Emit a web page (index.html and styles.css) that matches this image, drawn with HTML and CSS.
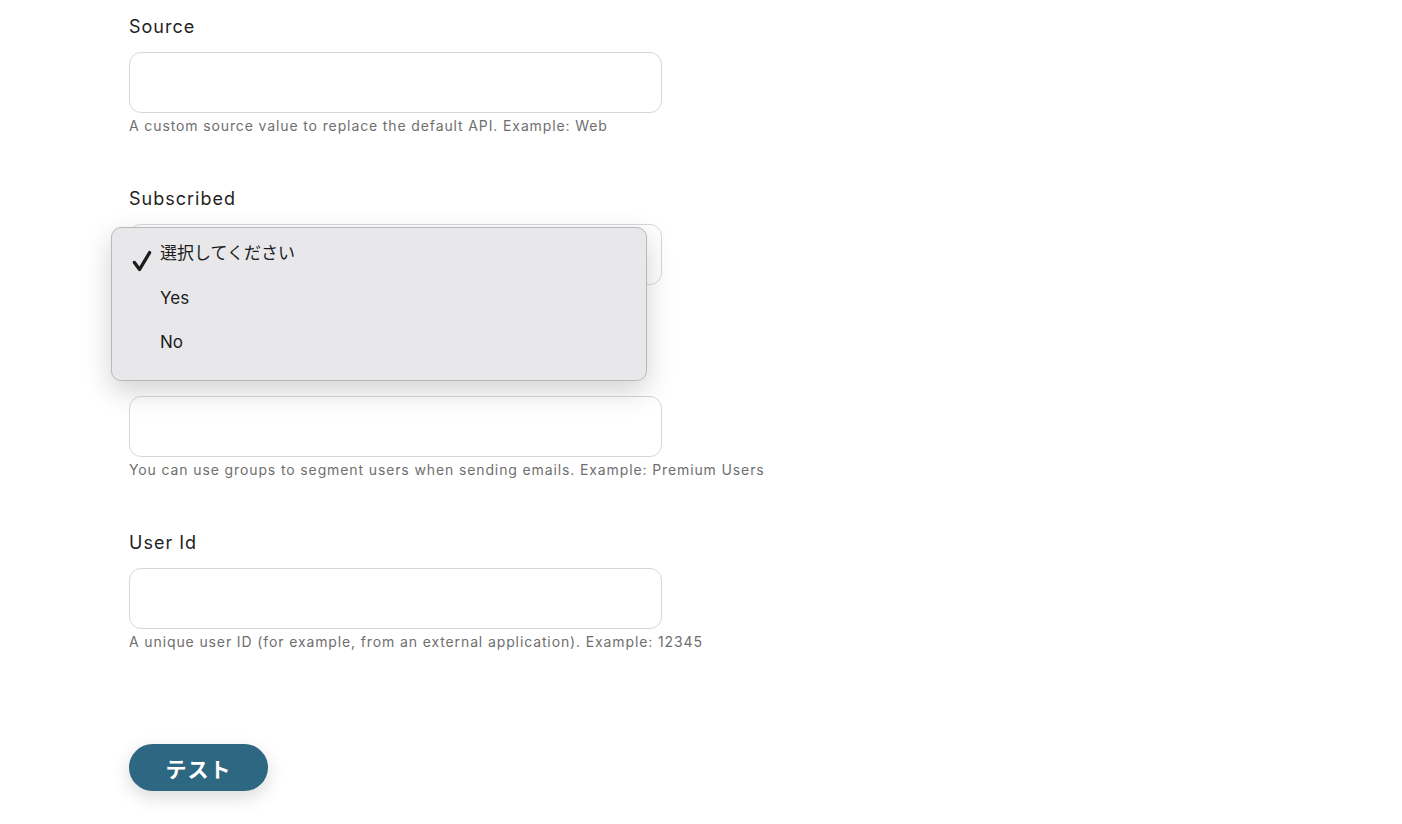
FILE: index.html
```html
<!DOCTYPE html>
<html lang="ja">
<head>
    <meta charset="UTF-8">
    <meta name="viewport" content="width=device-width, initial-scale=1.0">
    <title>Loops Contact</title>
    <link rel="stylesheet" href="styles.css">
</head>
<body>
    <form class="form">
        <div class="field">
            <label class="label">Source</label>
            <input class="input" type="text">
            <div class="help">A custom source value to replace the default API. Example: Web</div>
        </div>

        <div class="field field-select">
            <label class="label">Subscribed</label>
            <div class="select"></div>
            <div class="help">&nbsp;</div>

            <!-- 開いているネイティブのドロップダウン -->
            <div class="popup">
                <div class="option selected">
                    <svg class="check" width="20" height="22" viewBox="0 0 20 22">
                        <path d="M2.4 12.4 L7.6 19.4 L17.6 2.6" fill="none" stroke="#1c1c1c" stroke-width="3.3" stroke-linecap="round" stroke-linejoin="round"/>
                    </svg>
                    選択してください
                </div>
                <div class="option">Yes</div>
                <div class="option">No</div>
            </div>
        </div>

        <div class="field">
            <label class="label">User Group</label>
            <input class="input" type="text">
            <div class="help">You can use groups to segment users when sending emails. Example: Premium Users</div>
        </div>

        <div class="field">
            <label class="label">User Id</label>
            <input class="input" type="text">
            <div class="help">A unique user ID (for example, from an external application). Example: 12345</div>
        </div>

        <button class="test-button" type="button">テスト</button>
    </form>
</body>
</html>
```

FILE: styles.css
```css
body {
    margin: 0;
    padding: 0;
    background: #fff;
    font-family: Inter, "Noto Sans CJK JP", sans-serif;
    color: #222;
}
.form {
    padding: 13px 0 40px 129px;
}
.field {
    position: relative;
    margin-bottom: 49px;
}
.field-select {
    z-index: 2;
}
.label {
    display: block;
    font-size: 18px;
    line-height: 26px;
    letter-spacing: 1px;
    padding-top: 1px;
    margin-bottom: 12px;
    color: #1f1f1f;
}
.input, .select {
    display: block;
    box-sizing: border-box;
    width: 533px;
    height: 61px;
    border: 1px solid #d5d7db;
    border-radius: 12px;
    background: #fff;
    margin: 0;
}
.help {
    margin-top: 3px;
    font-size: 14px;
    line-height: 20px;
    letter-spacing: 0.88px;
    color: #6f6f6f;
}
.popup {
    position: absolute;
    z-index: 3;
    left: -18px;
    top: 42px;
    box-sizing: border-box;
    width: 536px;
    height: 154px;
    padding: 4px 0;
    background: #e8e8ea;
    border: 1px solid #b9b9bb;
    border-radius: 10px;
    box-shadow: 0 10px 28px rgba(0, 0, 0, 0.18);
}
.option {
    position: relative;
    height: 44px;
    line-height: 44px;
    padding-left: 48px;
    font-size: 17px;
    color: #1c1c1c;
}
.option.selected {
    line-height: 42px;
}
.check {
    position: absolute;
    left: 20px;
    top: 18px;
}
.test-button {
    display: block;
    width: 139px;
    height: 47px;
    margin-top: 92px;
    border: none;
    border-radius: 24px;
    background: #2e6781;
    color: #fff;
    font-family: Inter, "Noto Sans CJK JP", sans-serif;
    font-size: 21px;
    font-weight: bold;
    letter-spacing: 1px;
    box-shadow: 0 6px 18px rgba(0, 0, 0, 0.15);
    cursor: pointer;
}
```
